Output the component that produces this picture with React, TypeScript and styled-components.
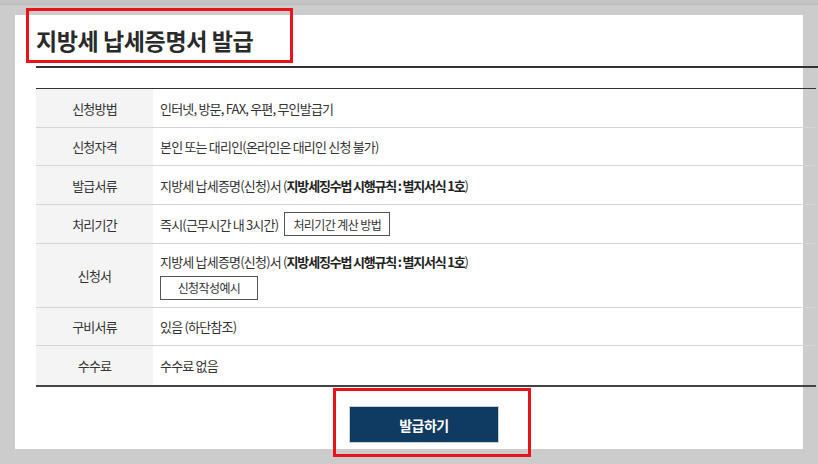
import React from 'react'
import styled, { createGlobalStyle } from 'styled-components'

type Row = {
  label: string
  height: number
  content: React.ReactNode
}

const GlobalStyle = createGlobalStyle`
  html, body {
    margin: 0;
    padding: 0;
    background: #cccccc;
    overflow: hidden;
  }
  body {
    font-family: "Noto Sans CJK KR", "Noto Sans", sans-serif;
    color: #333;
  }
`

const App = () => {
  const rows: Row[] = [
    { label: '신청방법', height: 38, content: '인터넷, 방문, FAX, 우편, 무인발급기' },
    { label: '신청자격', height: 38, content: '본인 또는 대리인(온라인은 대리인 신청 불가)' },
    {
      label: '발급서류',
      height: 39,
      content: (
        <>
          지방세 납세증명(신청)서 (<Strong>지방세징수법 시행규칙 : 별지서식 1호</Strong>)
        </>
      ),
    },
    {
      label: '처리기간',
      height: 39,
      content: (
        <InlineLine>
          즉시(근무시간 내 3시간)
          <OutlineButton $width={106}>처리기간 계산 방법</OutlineButton>
        </InlineLine>
      ),
    },
    {
      label: '신청서',
      height: 64,
      content: (
        <Stack>
          <span>
            지방세 납세증명(신청)서 (<Strong>지방세징수법 시행규칙 : 별지서식 1호</Strong>)
          </span>
          <OutlineButton $width={98}>신청작성예시</OutlineButton>
        </Stack>
      ),
    },
    { label: '구비서류', height: 38, content: '있음 (하단참조)' },
    { label: '수수료', height: 40, content: '수수료 없음' },
  ]

  return (
    <>
      <GlobalStyle />
      <TopStrip />
      <Page>
        <Panel>
          <TitleBox>
            <Title>지방세 납세증명서 발급</Title>
          </TitleBox>
          <ThickRule />
          <InfoTable>
            {rows.map((row) => (
              <TableRow key={row.label} $height={row.height}>
                <LabelCell>{row.label}</LabelCell>
                <ValueCell>{row.content}</ValueCell>
              </TableRow>
            ))}
          </InfoTable>
          <ButtonRow>
            <ActionBox>
              <IssueButton>발급하기</IssueButton>
            </ActionBox>
          </ButtonRow>
        </Panel>
      </Page>
    </>
  )
}

const TopStrip = styled.div`
  height: 4px;
  background: #c4c4c4;
  border-bottom: 1px solid #bdbdbd;
`

const Page = styled.div`
  height: 459px;
  padding: 10px 15px 0 15px;
  box-sizing: border-box;
`

const Panel = styled.div`
  display: flow-root;
  width: 788px;
  height: 434px;
  background: #ffffff;
  padding-left: 21px;
  box-sizing: border-box;
`

const TitleBox = styled.div`
  width: 267px;
  height: 55px;
  margin: -7px 0 0 -10px;
  border: 3px solid #e8141a;
  box-sizing: border-box;
  padding: 17px 7px 0 7px;
`

const Title = styled.h1`
  margin: 0;
  font-size: 23px;
  line-height: 24px;
  font-weight: 700;
  letter-spacing: -0.4px;
  color: #2a2a2a;
  white-space: nowrap;
`

const ThickRule = styled.div`
  width: 782px;
  margin-top: 3px;
  border-top: 2px solid #333;
`

const InfoTable = styled.div`
  width: 780px;
  margin-top: 20px;
  border-top: 1px solid #333;
  border-bottom: 2px solid #444;
  display: flex;
  flex-direction: column;
`

const TableRow = styled.div<{ $height: number }>`
  display: flex;
  box-sizing: border-box;
  height: ${(p) => p.$height}px;
  font-size: 13px;
  letter-spacing: -0.8px;
  color: #333;
  & + & {
    border-top: 1px solid #d5d5d5;
  }
`

const LabelCell = styled.div`
  width: 117px;
  flex-shrink: 0;
  background: #f4f4f4;
  display: flex;
  align-items: center;
  justify-content: center;
`

const ValueCell = styled.div`
  flex: 1;
  display: flex;
  align-items: center;
  padding-left: 7px;
`

const Strong = styled.b`
  font-weight: 700;
  letter-spacing: -1.2px;
  color: #222;
`

const InlineLine = styled.div`
  display: flex;
  align-items: center;
  gap: 6px;
`

const Stack = styled.div`
  display: flex;
  flex-direction: column;
  align-items: flex-start;
  gap: 5px;
`

const OutlineButton = styled.button<{ $width: number }>`
  width: ${(p) => p.$width}px;
  height: 24px;
  padding: 0;
  background: #fff;
  border: 1px solid #555;
  font-family: inherit;
  font-size: 12px;
  letter-spacing: -0.6px;
  color: #333;
  cursor: pointer;
`

const ButtonRow = styled.div`
  width: 780px;
  display: flex;
  justify-content: center;
`

const ActionBox = styled.div`
  margin: 1px 0 0 12px;
  border: 3px solid #e8141a;
  padding: 15px 29px 11px 13px;
`

const IssueButton = styled.button`
  width: 150px;
  height: 37px;
  background: #0f3a61;
  border: 1px solid #c8d0d8;
  color: #fff;
  font-family: inherit;
  font-size: 14px;
  font-weight: 700;
  letter-spacing: -0.5px;
  cursor: pointer;
`

export default App
